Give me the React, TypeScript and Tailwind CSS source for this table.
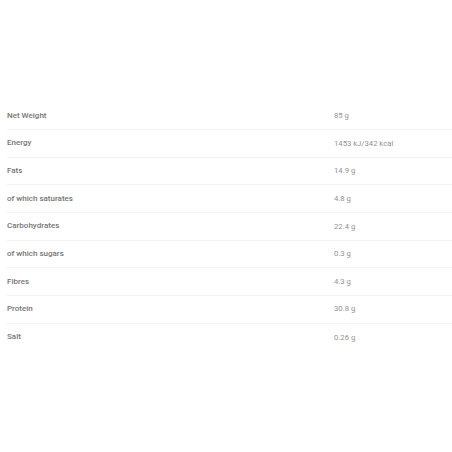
const rows: [string, string][] = [
	["Net Weight", "85 g"],
	["Energy", "1453 kJ/342 kcal"],
	["Fats", "14.9 g"],
	["of which saturates", "4.8 g"],
	["Carbohydrates", "22.4 g"],
	["of which sugars", "0.3 g"],
	["Fibres", "4.3 g"],
	["Protein", "30.8 g"],
	["Salt", "0.26 g"],
];

export default function App() {
	return (
		<div className="w-[452px] h-[452px] bg-white pt-[102.5px] pl-[7px] font-['Roboto',sans-serif]">
			<div className="flex flex-col">
				{rows.map(([label, value], i) => (
					<div
						key={label}
						className={`flex items-center h-[27.625px] ${i < rows.length - 1 ? "border-b border-[#f2f2f2]" : ""}`}
					>
						<span className="w-[327px] text-[8px] font-medium text-[#757575]">{label}</span>
						<span className="text-[7.7px] text-[#929292]">{value}</span>
					</div>
				))}
			</div>
		</div>
	);
}
